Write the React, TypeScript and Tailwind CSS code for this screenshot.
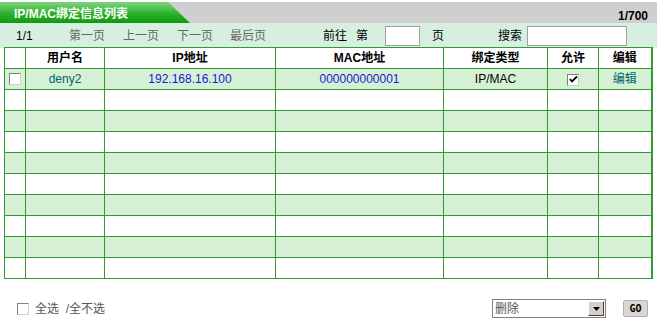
import React from 'react';

const font = { fontFamily: '"Liberation Sans", "Noto Sans CJK SC", sans-serif' };

const cols = [21, 79, 171, 168, 104, 51, 53];

function Row({ i }: { i: number }) {
  const green = i % 2 === 0;
  const bg = green ? 'bg-[#d6f0d6]' : 'bg-white';
  if (i === 0) {
    return (
      <tr className={`${bg} h-[21px] text-[12px]`}>
        <td className="border border-[#339933] pl-[4px]">
          <span className="block w-[12px] h-[12px] border border-t-[#808080] border-l-[#808080] border-b-[#d4d0c8] border-r-[#d4d0c8] bg-white" />
        </td>
        <td className="border border-[#339933] text-center text-[#006666]">deny2</td>
        <td className="border border-[#339933] text-center text-[#1a1acc]">192.168.16.100</td>
        <td className="border border-[#339933] text-center text-[#1a1acc]">000000000001</td>
        <td className="border border-[#339933] text-center text-black">IP/MAC</td>
        <td className="border border-[#339933] text-center">
          <span className="inline-flex items-center justify-center w-[12px] h-[12px] border border-t-[#808080] border-l-[#808080] border-b-[#d4d0c8] border-r-[#d4d0c8] bg-white align-middle">
            <svg width="9" height="9" viewBox="0 0 9 9"><path d="M1 4 L3 6.5 L8 1.5" stroke="#000" strokeWidth="1.8" fill="none" /></svg>
          </span>
        </td>
        <td className="border border-[#339933] text-center text-[#006666]">编辑</td>
      </tr>
    );
  }
  return (
    <tr className={`${bg} h-[21px]`}>
      {cols.map((_, k) => (
        <td key={k} className="border border-[#339933]" />
      ))}
    </tr>
  );
}

export default function App() {
  return (
    <div className="w-[657px] h-[321px] bg-white relative overflow-hidden text-black" style={font}>
      {/* title bar */}
      <div className="flex h-[23px] pt-[2px] bg-white">
        <div className="flex-1 flex bg-[#cfcfcf]">
          <div
            className="w-[190px] bg-gradient-to-b from-[#7fd37f] via-[#2fb52f] to-[#0a9a0a] text-white font-bold text-[12px] pl-[14px] pt-[3px]"
            style={{ clipPath: 'polygon(0 0, 168px 0, 190px 100%, 0 100%)' }}
          >
            IP/MAC绑定信息列表
          </div>
          <div className="flex-1" />
          <div className="font-bold text-[12px] pr-[9px] pt-[5px]">1/700</div>
        </div>
      </div>
      {/* toolbar */}
      <div className="flex items-center h-[25px] bg-[#d6efe0] text-[12px] pl-[16px]">
        <span className="w-[53px]">1/1</span>
        <span className="w-[54px] text-[#666]">第一页</span>
        <span className="w-[54px] text-[#666]">上一页</span>
        <span className="w-[53px] text-[#666]">下一页</span>
        <span className="w-[93px] text-[#666]">最后页</span>
        <span className="w-[33px]">前往</span>
        <span className="w-[29px]">第</span>
        <span className="w-[35px] h-[20px] bg-white border border-[#a0a0a0] mr-[12px]" />
        <span className="w-[66px]">页</span>
        <span className="w-[29px]">搜索</span>
        <span className="w-[100px] h-[20px] bg-white border border-[#a0a0a0]" />
      </div>
      {/* table */}
      <div className="pl-[4px] -mt-[1px]">
        <table className="border-collapse border-r-2 border-r-[#339933] table-fixed" style={{ width: 648 }}>
          <colgroup>
            {cols.map((w, k) => (
              <col key={k} style={{ width: w }} />
            ))}
          </colgroup>
          <thead>
            <tr className="h-[21px] bg-white text-[12px] font-bold">
              <th className="border border-[#339933]" />
              <th className="border border-[#339933]">用户名</th>
              <th className="border border-[#339933]">IP地址</th>
              <th className="border border-[#339933]">MAC地址</th>
              <th className="border border-[#339933]">绑定类型</th>
              <th className="border border-[#339933]">允许</th>
              <th className="border border-[#339933]">编辑</th>
            </tr>
          </thead>
          <tbody>
            {Array.from({ length: 10 }).map((_, i) => (
              <Row key={i} i={i} />
            ))}
          </tbody>
        </table>
      </div>
      {/* footer */}
      <div className="flex items-center mt-[20px] text-[12px]">
        <span className="ml-[17px] w-[12px] h-[12px] border border-t-[#808080] border-l-[#808080] border-b-[#d4d0c8] border-r-[#d4d0c8] bg-white" />
        <span className="ml-[6px] text-[#555] whitespace-pre">全选  /全不选</span>
        <div className="flex-1" />
        <div className="w-[114px] h-[19px] border border-[#808080] bg-white flex items-center">
          <span className="flex-1 pl-[2px] text-[#555]">删除</span>
          <span className="w-[16px] h-[15px] mr-[1px] bg-[#d4d0c8] border border-t-white border-l-white border-b-[#404040] border-r-[#404040] flex items-center justify-center">
            <svg width="7" height="4" viewBox="0 0 7 4"><path d="M0 0 H7 L3.5 4 Z" fill="#000" /></svg>
          </span>
        </div>
        <span className="ml-[17px] mr-[9px] w-[25px] h-[17px] bg-[#d8d8d0] border border-[#b0b0b0] rounded-[2px] flex items-center justify-center text-[10px] font-bold" style={{ fontFamily: '"DejaVu Sans Mono", monospace' }}>GO</span>
      </div>
    </div>
  );
}
